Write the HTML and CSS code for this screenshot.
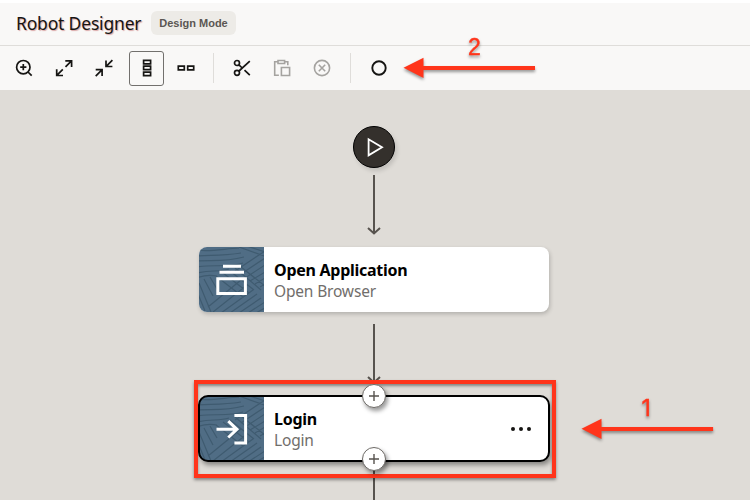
FILE: index.html
```html
<!DOCTYPE html>
<html lang="en">
<head>
<meta charset="utf-8">
<title>Robot Designer</title>
<link rel="stylesheet" href="styles.css">
</head>
<body>
<svg class="defs" width="0" height="0" aria-hidden="true">
  <symbol id="texture" viewBox="0 0 65 65">
    <path d="M-2 3C10 5 24 2 40 1M-2 9C12 8 24 9 42 6M-2 14C14 13 26 15 45 10M-2 20C14 17 28 21 44 16M-2 26C12 23 20 25 30 22M-2 31C5 28 12 28 18 29M40 0L65 9M48 -1L66 5M36 24L66 4M42 27L66 11M46 31L66 18M51 34L66 25M56 37L66 31M61 40L66 37M0 36L12 65M5 32L14 49M11 30L18 42M-1 47L6 64M14 65L48 38M9 60L42 33M22 66L54 43M31 66L58 47M40 66L62 51M49 66L66 55M57 66L66 61M17 29L44 50M24 26L50 46M31 24L55 43M36 21L62 43M42 20L66 39"/>
  </symbol>
</svg>
<header class="header">
  <h1 class="title">Robot Designer</h1>
  <span class="badge">Design Mode</span>
</header>
<nav class="toolbar">
  <svg class="icon" viewBox="0 0 24 24"><circle cx="11.3" cy="11.2" r="6.7"/><path d="M16 16l3.7 3.7M8.2 11.2h6.2M11.3 8.1v6.2"/></svg>
  <svg class="icon" viewBox="0 0 24 24"><path d="M13.3 4.8h6.3v6.3M19.5 4.9l-6 6M4.7 13.3v6.2H11M4.8 19.4l6-6"/></svg>
  <svg class="icon" viewBox="0 0 24 24"><path d="M14 4.4v6.1h6.4M14.2 10.3l6.2-6.2M3.7 13.7h6.4V20M9.9 13.9l-6.2 6.2"/></svg>
  <span class="selected"><svg class="icon" viewBox="0 0 24 24"><path d="M8.6 4.3h7v3.5h-7zM8.6 10.1h7v3.6h-7zM8.6 16.1h7v3.5h-7z"/></svg></span>
  <svg class="icon horizontal" viewBox="0 0 24 24"><path d="M4.3 10.1h6v3.7h-6zM13.7 10.1h6v3.7h-6z"/></svg>
  <i class="separator"></i>
  <svg class="icon" viewBox="0 0 24 24"><circle cx="7" cy="7" r="2.5"/><circle cx="7" cy="16.8" r="2.5"/><path d="M9 15L19.8 5.2M8.9 8.9l2.8 2.6M14.5 14.2l5.3 5"/></svg>
  <svg class="icon muted" viewBox="0 0 24 24"><path d="M8 5.7H4.7v13.6h4.2M14.7 5.7h3.1v3.5M8 4.5h6.6v3H8zM11.4 11.5h8.2v8h-8.2z"/></svg>
  <svg class="icon muted" viewBox="0 0 24 24"><circle cx="12" cy="12" r="7.6"/><path d="M8.8 8.8l6.4 6.4M15.2 8.8l-6.4 6.4"/></svg>
  <i class="separator"></i>
  <svg class="icon record" viewBox="0 0 24 24"><circle cx="12" cy="12" r="6.7"/></svg>
</nav>
<main class="canvas">
  <svg class="links" viewBox="0 0 750 410"><path d="M374 85v59M368 138l6 5.500 6-5.500M374 234v59M368 287l6 5.500 6-5.500M374 380v30"/></svg>
  <div class="start"><svg viewBox="0 0 40 40"><path d="M14.600 12.300v16L28 20.300z"/></svg></div>
  <article class="step open">
    <div class="tile">
      <svg class="texture"><use href="#texture"/></svg>
      <svg class="glyph" viewBox="0 0 65 65"><path d="M24 19.300h18M20.500 25.300h24.500M18.800 31.700h27.600v14.800H18.800z"/></svg>
    </div>
    <div class="text"><h2>Open Application</h2><p>Open Browser</p></div>
  </article>
  <article class="step login">
    <div class="tile">
      <svg class="texture"><use href="#texture"/></svg>
      <svg class="glyph" viewBox="0 0 65 65"><path d="M35.400 19.500h11.200v27.400H35.400M17.500 33.300H37M29.300 25.100l8.600 8.200-8.600 8.200"/></svg>
    </div>
    <div class="text"><h2>Login</h2><p>Login</p></div>
    <svg class="more" viewBox="0 0 24 8"><circle cx="4" cy="4" r="2"/><circle cx="12" cy="4" r="2"/><circle cx="20" cy="4" r="2"/></svg>
  </article>
  <div class="highlight"></div>
  <span class="add before"><svg viewBox="0 0 24 24"><path d="M7 12h10M12 7v10"/></svg></span>
  <span class="add after"><svg viewBox="0 0 24 24"><path d="M7 12h10M12 7v10"/></svg></span>
</main>
<svg class="notes" viewBox="0 0 750 500">
  <path d="M403.500 67.800l20-10v8.100H535v4H423.500v8zM581.500 428.800l20-10v8.100h111.600v4H601.500v8z"/>
  <text x="468" y="55">2</text>
  <text class="one" x="641.500" y="416">1</text>
</svg>
</body>
</html>
```
FILE: styles.css
```css
* { box-sizing: border-box; }
body {
  margin: 0;
  width: 750px;
  height: 500px;
  overflow: hidden;
  position: relative;
  padding-top: 3px;
  background: #fff;
  font-family: "Open Sans", "Noto Sans", sans-serif;
}
.defs { position: absolute; }
h1, h2, p { margin: 0; }
.header {
  display: flex;
  align-items: center;
  gap: 10px;
  height: 43px;
  padding: 0 16px 3px;
  background: #f9f8f7;
  border-bottom: 1px solid #dfddda;
}
.title {
  width: 125px;
  white-space: nowrap;
  font: 400 17.5px/24px "Noto Sans", sans-serif;
  letter-spacing: -0.18px;
  color: #161513;
  text-shadow: 1px 1px 1px #d9a5a5;
}
.badge {
  width: 85px;
  height: 24px;
  border-radius: 6px;
  background: #edebe7;
  color: #5b5753;
  font: 700 11px/24px "Liberation Sans", sans-serif;
  text-align: center;
}
.toolbar {
  display: flex;
  align-items: center;
  gap: 16px;
  height: 44px;
  padding-left: 12px;
  background: #f9f8f7;
}
.icon {
  flex: none;
  width: 24px;
  height: 24px;
  fill: none;
  stroke: #161513;
  stroke-width: 1.7;
}
.muted { stroke: #a5a3a0; stroke-width: 1.6; }
.selected {
  display: flex;
  align-items: center;
  justify-content: center;
  width: 35px;
  height: 35px;
  margin: 0 -6.5px 0 -3px;
  border: 1px solid #72706d;
  border-radius: 3px;
}
.horizontal { margin-right: -0.5px; }
.separator { width: 1px; height: 30px; background: #dfddda; }
.record { stroke-width: 1.9; }
.canvas {
  position: relative;
  height: 410px;
  background: #dfdcd7;
}
.links {
  position: absolute;
  inset: 0;
  fill: none;
  stroke: #57534e;
  stroke-width: 2;
}
.start {
  position: absolute;
  left: 353px;
  top: 36px;
  width: 42px;
  height: 42px;
  border: 1px solid #000;
  border-radius: 50%;
  background: #34302c;
  box-shadow: 2px 3px 4px #0002;
}
.start svg { display: block; fill: none; stroke: #fff; stroke-width: 1.8; }
.step {
  position: absolute;
  left: 199px;
  display: flex;
  width: 350px;
  height: 65px;
  border-radius: 8px;
  background: #fff;
  box-shadow: 1px 2px 4px #0003;
}
.open { top: 157px; }
.login { top: 306px; box-shadow: 2px 4px 5px #0006; }
.login::after {
  content: "";
  position: absolute;
  inset: -1px;
  border: 2px solid #000;
  border-radius: 10px;
}
.tile {
  position: relative;
  width: 65px;
  height: 65px;
  overflow: hidden;
  border-radius: 8px 0 0 8px;
  background: #506d85;
}
.texture, .glyph { position: absolute; inset: 0; width: 65px; height: 65px; fill: none; }
.texture { stroke: #3f5b70; stroke-width: 1.2; }
.glyph { stroke: #fff; stroke-width: 3; }
.text { padding: 12px 0 0 10px; white-space: nowrap; }
.text h2 { font: 700 16px/22px "Noto Sans", sans-serif; letter-spacing: -0.27px; color: #000; }
.text p { font: 400 15.5px/21px "Noto Sans", sans-serif; letter-spacing: -0.17px; color: #716e6b; }
.more { width: 24px; height: 8px; margin: 29px 16px 0 auto; fill: #161513; }
.highlight {
  position: absolute;
  left: 194px;
  top: 290px;
  width: 362px;
  height: 98px;
  border: 4px solid #ff351b;
  box-shadow: 0 2px 3px #0006, inset 0 2px 3px #0006;
}
.add {
  position: absolute;
  left: 362px;
  width: 24px;
  height: 24px;
  border: 1px solid #6d6a66;
  border-radius: 50%;
  background: #fff;
  box-shadow: 2px 3px 4px #0006;
}
.add svg { display: block; margin: -1px; width: 24px; height: 24px; stroke: #57534e; stroke-width: 1.4; }
.before { top: 294px; }
.after { top: 357px; }
.notes {
  position: absolute;
  left: 0;
  top: 0;
  width: 750px;
  height: 500px;
  fill: #ff351b;
  filter: drop-shadow(0 2px 1.5px #0006);
}
.notes text { font: 23px "Liberation Sans", sans-serif; stroke: #ff351b; stroke-width: 0.4; }
.notes .one { font-family: Inter, sans-serif; }
```
